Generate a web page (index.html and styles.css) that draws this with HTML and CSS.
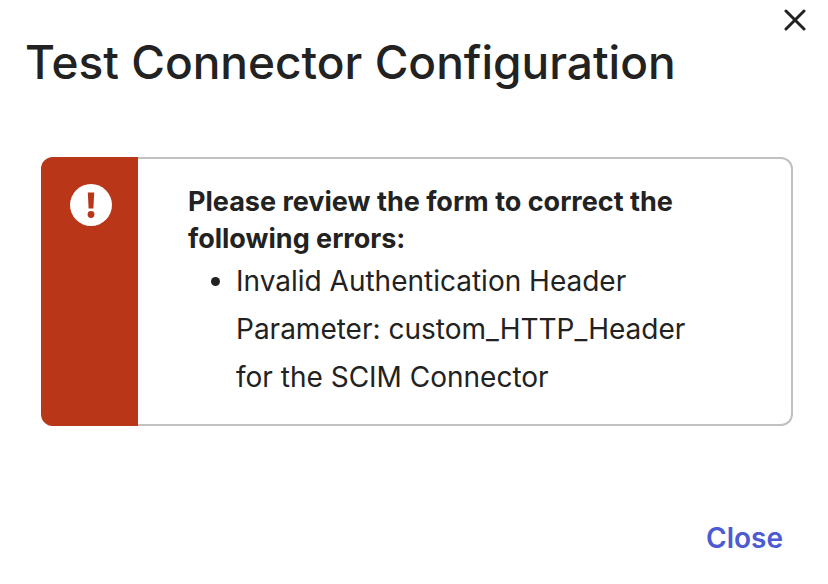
FILE: index.html
```html
<!DOCTYPE html>
<html lang="en">
<head>
  <meta charset="UTF-8">
  <meta name="viewport" content="width=device-width, initial-scale=1">
  <title>Test Connector Configuration</title>
  <link rel="stylesheet" href="styles.css">
</head>
<body>
  <div class="dialog" role="dialog" aria-labelledby="dialog-title">
    <button type="button" class="dialog-dismiss" aria-label="Dismiss">
      <svg width="22" height="22" viewBox="0 0 22 22" fill="none" stroke="currentColor" stroke-width="3" stroke-linecap="round">
        <path d="M2 2l18 18M20 2L2 20"/>
      </svg>
    </button>
    <h1 id="dialog-title" class="dialog-title">Test Connector Configuration</h1>
    <div class="alert" role="alert">
      <div class="alert-icon">
        <svg width="42" height="42" viewBox="0 0 42 42">
          <circle cx="21" cy="21" r="21" fill="#fff"/>
          <path d="M17.8 8.5h6.4l-.8 16h-4.8z" fill="#b93618"/>
          <circle cx="21" cy="30.5" r="3.4" fill="#b93618"/>
        </svg>
      </div>
      <div class="alert-body">
        <h2 class="alert-title">Please review the form to correct the following errors:</h2>
        <ul class="alert-list">
          <li>Invalid Authentication Header Parameter: custom_HTTP_Header for the SCIM Connector</li>
        </ul>
      </div>
    </div>
    <div class="dialog-footer">
      <button type="button" class="link-button">Close</button>
    </div>
  </div>
</body>
</html>
```

FILE: styles.css
```css
* {
  box-sizing: border-box;
}
body {
  margin: 0;
  background: #fff;
  color: #222;
  font-family: Inter, sans-serif;
}
button {
  border: 0;
  padding: 0;
  background: none;
  cursor: pointer;
}
.dialog {
  position: relative;
  padding: 32px 35px 26px 41px;
}
.dialog-dismiss {
  position: absolute;
  top: 9px;
  right: 22px;
  width: 22px;
  height: 22px;
  color: #222;
}
.dialog-dismiss svg {
  display: block;
}
.dialog-title {
  margin: 0 0 0 -16px;
  font-size: 46px;
  font-weight: 500;
  line-height: 60px;
}
.alert {
  display: flex;
  margin-top: 65px;
  border: 2px solid #c1c1c1;
  border-left: 0;
  border-radius: 12px;
}
.alert-icon {
  flex: 0 0 97px;
  margin: -2px 0;
  padding: 27px 0 0 29px;
  border-radius: 12px 0 0 12px;
  background: #b93618;
}
.alert-body {
  flex: 1;
  padding: 24px 72px 23px 50px;
}
.alert-title {
  margin: 0;
  font-size: 27px;
  font-weight: 700;
  line-height: 37px;
}
.alert-list {
  margin: 0;
  padding-left: 48px;
  font-size: 28px;
  line-height: 48px;
}
.dialog-footer {
  display: flex;
  justify-content: flex-end;
  margin-top: 92px;
  padding-right: 10px;
}
.link-button {
  color: #4c5bd4;
  font: 600 28px/40px Inter, sans-serif;
}
```
